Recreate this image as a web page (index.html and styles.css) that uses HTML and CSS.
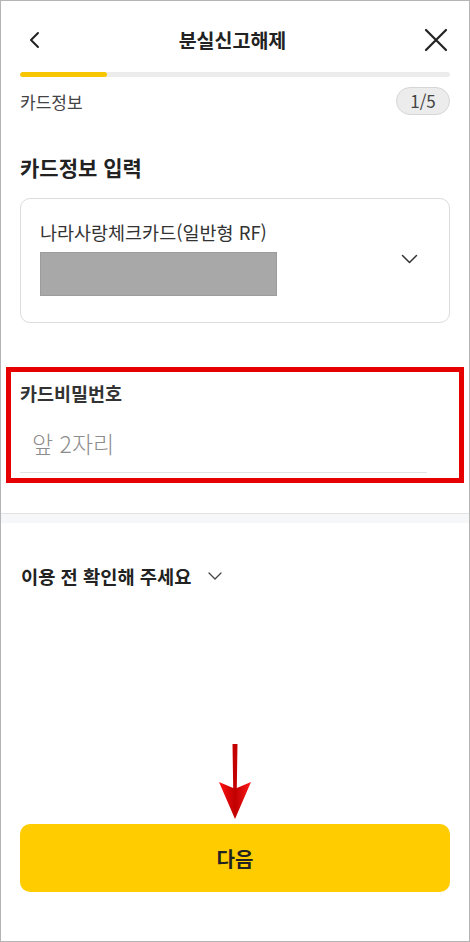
FILE: index.html
```html
<!DOCTYPE html>
<html lang="ko">
<head>
    <meta charset="UTF-8">
    <meta name="viewport" content="width=device-width, initial-scale=1.0">
    <title>분실신고해제</title>
    <link rel="stylesheet" href="styles.css">
</head>
<body>
    <div class="screen">
        <div class="header">
            <svg class="icon_back" width="14" height="18" viewBox="0 0 14 18">
                <path d="M11 2 L4 9 L11 16" fill="none" stroke="#222" stroke-width="2" stroke-linecap="round" stroke-linejoin="round"/>
            </svg>
            <h1 class="titre">분실신고해제</h1>
            <svg class="icon_close" width="24" height="24" viewBox="0 0 24 24">
                <path d="M2 2 L22 22 M22 2 L2 22" fill="none" stroke="#222" stroke-width="2.2" stroke-linecap="round"/>
            </svg>
        </div>

        <div class="progress"><div class="progress_fill"></div></div>

        <div class="step_row">
            <span class="step_name">카드정보</span>
            <span class="step_badge">1/5</span>
        </div>

        <h2 class="section_titre">카드정보 입력</h2>

        <div class="card_box">
            <div class="card_info">
                <p class="card_name">나라사랑체크카드(일반형 RF)</p>
                <div class="card_hidden"></div>
            </div>
            <svg class="icon_down" width="17" height="10" viewBox="0 0 17 10">
                <path d="M1.5 1.5 L8.5 8.5 L15.5 1.5" fill="none" stroke="#333" stroke-width="1.5" stroke-linecap="round" stroke-linejoin="round"/>
            </svg>
        </div>

        <div class="pw_section">
            <p class="pw_label">카드비밀번호</p>
            <div class="pw_field">
                <input type="password" class="pw_input" placeholder="앞 2자리">
            </div>
        </div>

        <div class="divider"></div>

        <div class="notice">
            <span>이용 전 확인해 주세요</span>
            <svg class="icon_notice" width="14" height="8" viewBox="0 0 14 8">
                <path d="M1 1 L7 7 L13 1" fill="none" stroke="#444" stroke-width="1.3" stroke-linecap="round" stroke-linejoin="round"/>
            </svg>
        </div>

        <div class="spacer"></div>

        <div class="footer">
            <svg class="arrow" width="36" height="76" viewBox="0 0 36 76">
                <defs>
                    <linearGradient id="rouge" x1="0" y1="0" x2="1" y2="0">
                        <stop offset="0" stop-color="#ff1010"/>
                        <stop offset="0.5" stop-color="#c00000"/>
                        <stop offset="1" stop-color="#ff1a1a"/>
                    </linearGradient>
                </defs>
                <path d="M15.5 0 L20.5 0 L19.8 44 L34 38 L18 75 L2 38 L16.2 44 Z" fill="url(#rouge)"/>
            </svg>
            <button class="next_btn">다음</button>
        </div>
    </div>
</body>
</html>
```

FILE: styles.css
```css
body {
    margin: 0;
    padding: 0;
    font-family: 'Noto Sans CJK KR', 'Noto Sans', sans-serif;
    background: #ffffff;
    color: #222;
}

.screen {
    width: 470px;
    height: 942px;
    box-sizing: border-box;
    border: 1px solid #b4b4b4;
    display: flex;
    flex-direction: column;
    background: #ffffff;
}

.header {
    display: flex;
    align-items: center;
    justify-content: space-between;
    height: 38px;
    padding: 20px 21px 0 26px;
}

.titre {
    margin: 0;
    font-size: 19.5px;
    font-weight: 700;
    color: #222;
    line-height: 38px;
}

.progress {
    margin: 13px 19px 0 19px;
    height: 5px;
    border-radius: 3px;
    background: #ececec;
    overflow: hidden;
}

.progress_fill {
    width: 87px;
    height: 100%;
    border-radius: 3px;
    background: #f7c600;
}

.step_row {
    display: flex;
    align-items: center;
    justify-content: space-between;
    margin: 10px 19px 0 19px;
    height: 28px;
}

.step_name {
    font-size: 17px;
    color: #444;
}

.step_badge {
    box-sizing: border-box;
    width: 54px;
    height: 28px;
    border-radius: 14px;
    background: #ececec;
    border: 1px solid #d6d6d6;
    font-size: 17px;
    color: #444;
    text-align: center;
    line-height: 25px;
}

.section_titre {
    margin: 38px 0 0 19px;
    font-size: 21px;
    font-weight: 700;
    line-height: 28px;
    color: #222;
}

.card_box {
    display: flex;
    align-items: center;
    justify-content: space-between;
    margin: 17px 19px 0 19px;
    padding: 21px 31px 26px 19px;
    border: 1px solid #dcdcdc;
    border-radius: 10px;
}

.card_name {
    margin: 0;
    font-size: 18.5px;
    line-height: 24px;
    color: #333;
}

.card_hidden {
    margin-top: 8px;
    width: 235px;
    height: 42px;
    background: #a8a8a8;
    border: 1px solid #9c9c9c;
}

.icon_down {
    margin-top: 2px;
}

.pw_section {
    margin: 44px 5px 0 5px;
    padding: 9px 32px 5px 9px;
    border: 5px solid #e60000;
}

.pw_label {
    margin: 0;
    font-size: 18.5px;
    font-weight: 700;
    line-height: 24px;
    color: #333;
}

.pw_field {
    margin-top: 23px;
    padding: 0 0 14px 12px;
    border-bottom: 1px solid #e2e2e2;
}

.pw_input {
    border: none;
    outline: none;
    padding: 0;
    width: 100%;
    font-family: inherit;
    font-size: 23px;
    font-weight: 300;
    line-height: 30px;
    height: 30px;
    color: #333;
    background: transparent;
}

.pw_input::placeholder {
    color: #8c8c8c;
}

.divider {
    margin-top: 30px;
    height: 9px;
    border-top: 1px solid #e3e3e3;
    background: #f6f7f8;
}

.notice {
    display: flex;
    align-items: center;
    gap: 17px;
    margin: 40px 0 0 20px;
    font-size: 18.7px;
    font-weight: 700;
    line-height: 26px;
    color: #222;
}

.spacer {
    flex: 1;
}

.footer {
    position: relative;
    padding: 0 19px 49px 19px;
}

.arrow {
    position: absolute;
    left: 216px;
    top: -80px;
}

.next_btn {
    width: 100%;
    height: 68px;
    border: none;
    border-radius: 10px;
    background: #ffcc00;
    font-family: inherit;
    font-size: 20px;
    font-weight: 700;
    color: #222;
    cursor: pointer;
}
```
